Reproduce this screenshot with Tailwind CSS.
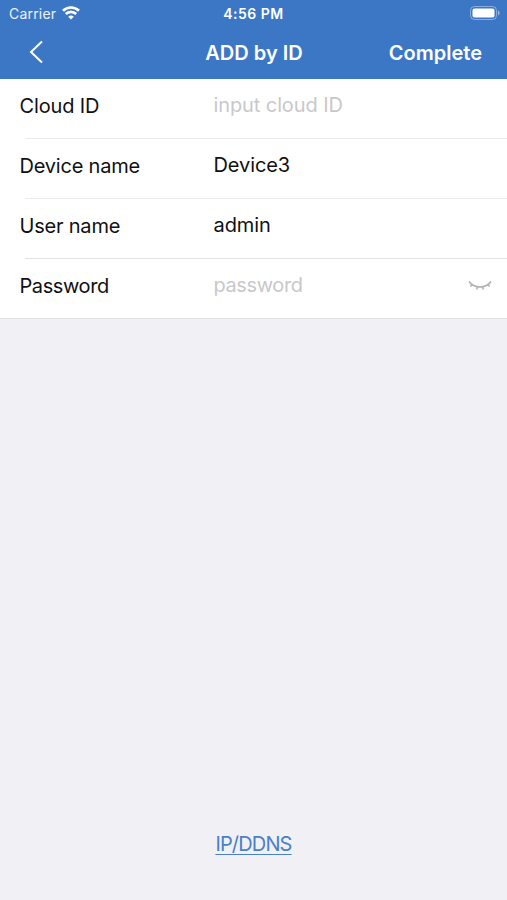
<!DOCTYPE html>
<html lang="en">
<head>
<meta charset="utf-8">
<title>ADD by ID</title>
<script src="https://cdn.jsdelivr.net/npm/@tailwindcss/browser@4"></script>
</head>
<body class="w-[507px] h-[900px] overflow-hidden bg-[#f0f0f5] font-['Inter',sans-serif] flex flex-col text-[#101012]">
<header class="bg-[#3c77c5] h-[79px] shrink-0 text-white">
  <div class="h-[27px] grid grid-cols-3 items-center pl-[9px] pr-[7px] text-[14px]">
    <div class="flex items-center gap-[6px]"><span class="tracking-[0.2px] text-white/90">Carrier</span>
      <svg class="w-[18px] h-[14px] -mt-px" viewBox="0 0 18 14" fill="none" stroke="white" stroke-width="2.6"><path d="M1 4.800a11.400 11.400 0 0 1 16 0M3.800 8a7.400 7.400 0 0 1 10.400 0"/><path d="M9 13.500L6.200 10.800a4 4 0 0 1 5.600 0z" fill="white" stroke="none"/></svg>
    </div>
    <span class="text-center font-semibold tracking-[0.5px] -ml-[2px]">4:56 PM</span>
    <svg class="justify-self-end w-[30px] h-[14px] -mt-px" viewBox="0 0 30 14"><rect x=".5" y=".5" width="26" height="13" rx="4" fill="none" stroke="white" stroke-opacity=".4"/><rect x="2.500" y="2.500" width="22" height="9" rx="2" fill="white"/><path d="M28 4.500v5q1.600-.7 1.600-2.500T28 4.500z" fill="white" fill-opacity=".5"/></svg>
  </div>
  <div class="h-[50px] grid grid-cols-3 items-center pl-[29px] pr-[25px] text-[20px] font-semibold">
    <svg class="w-[15px] h-[24px]" viewBox="0 0 15 24" fill="none" stroke="white" stroke-width="2"><path d="M13 1.500L2 12l11 10.500"/></svg>
    <span class="text-center -ml-[3px] mt-px">ADD by ID</span><span class="text-right mt-px">Complete</span>
  </div>
</header>
<main class="bg-white h-[240px] shrink-0 text-[20px] border-b border-[#e2e2e5]">
  <div class="h-[60px] flex flex-col"><div class="flex pl-[19.500px] pt-[12px] h-[59px]"><span class="w-[194px] tracking-[-0.15px]">Cloud ID</span><span class="-mt-px text-[#c8c8ca] tracking-[-0.1px]">input cloud ID</span></div><div class="ml-[25px] h-px bg-[#ebebed]"></div></div>
  <div class="h-[60px] flex flex-col"><div class="flex pl-[19.500px] pt-[12px] h-[59px]"><span class="w-[194px] tracking-[-0.2px]">Device name</span><span class="-mt-px tracking-[-0.1px]">Device3</span></div><div class="ml-[25px] h-px bg-[#ebebed]"></div></div>
  <div class="h-[60px] flex flex-col"><div class="flex pl-[19.500px] pt-[12px] h-[59px]"><span class="w-[194px] tracking-[-0.2px]">User name</span><span class="-mt-px tracking-[-0.1px]">admin</span></div><div class="ml-[25px] h-px bg-[#e4e4e6]"></div></div>
  <div class="h-[59px] flex pl-[19.500px] pr-[15px] pt-[12px]"><span class="w-[194px] tracking-[-0.4px]">Password</span><span class="-mt-px text-[#c8c8ca] tracking-[-0.4px]">password</span>
    <svg class="ml-auto mt-[9px] w-[24px] h-[12px]" viewBox="0 0 24 12" fill="none" stroke="#b2b2b4" stroke-width="1.600"><path d="M1 1.500c5.200 7.200 16.800 7.200 22 0M3.900 4.400L2.600 6.600M9.300 6.800L8.700 9.500M14.700 6.800l.6 2.700M20.100 4.400l1.300 2.200"/></svg>
  </div>
</main>
<footer class="mt-auto pb-[41px] text-center text-[20px] text-[#4a80c6]"><a class="inline-block underline decoration-1 underline-offset-[3px] tracking-[-0.85px]">IP/DDNS</a></footer>
</body>
</html>
